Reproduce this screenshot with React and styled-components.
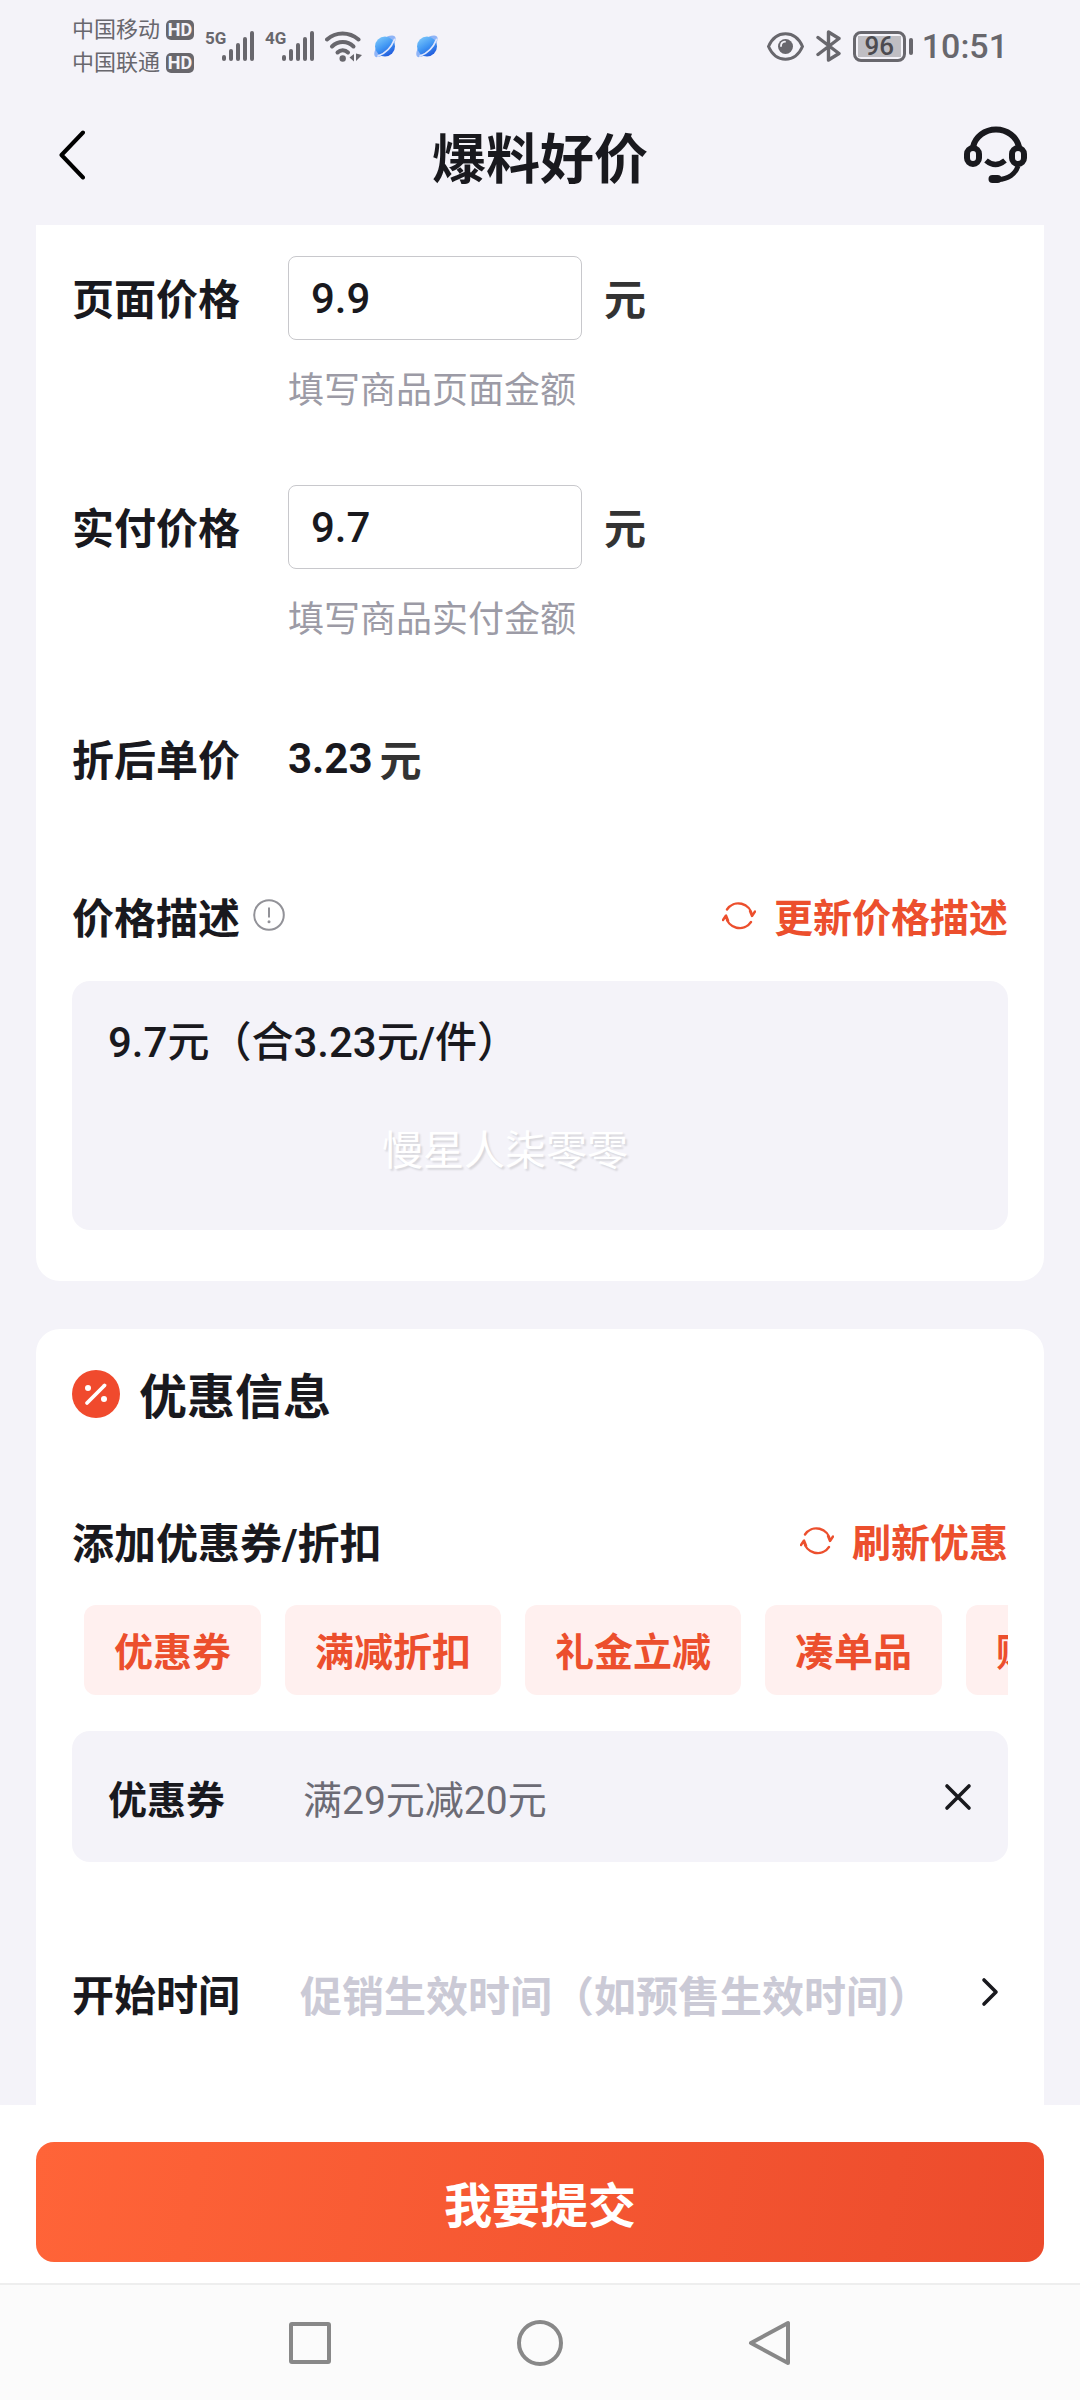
import React, { useState } from 'react';
import styled, { createGlobalStyle, ThemeProvider } from 'styled-components';

const theme = {
  page: '#f4f3f9',
  surface: '#ffffff',
  text: '#19191e',
  unit: '#333333',
  hint: '#9c9ba6',
  value: '#6c6b75',
  placeholder: '#cbcad6',
  status: '#68676d',
  accent: '#ec4f2d',
  accentSoft: '#fff0ef',
};

const GlobalStyle = createGlobalStyle`
  *, *::before, *::after {
    box-sizing: border-box;
  }
  body {
    margin: 0;
    background: ${theme.page};
  }
  body, input, textarea, button {
    font-family: Roboto, "Noto Sans CJK SC", sans-serif;
  }
  svg {
    display: block;
    flex: none;
  }
`;

const Page = styled.div`
  min-height: 100vh;
  display: flex;
  flex-direction: column;
  color: ${(props) => props.theme.text};
`;

const PlainButton = styled.button`
  display: flex;
  align-items: center;
  justify-content: center;
  padding: 0;
  border: 0;
  background: transparent;
  color: inherit;
  cursor: pointer;
`;

/* status bar */

const StatusBar = styled.div`
  display: flex;
  align-items: center;
  justify-content: space-between;
  height: 92px;
  padding: 0 72px;
  color: ${(props) => props.theme.status};
`;

const StatusGroup = styled.div`
  display: flex;
  align-items: center;
  gap: ${(props) => props.$gap}px;
`;

const Carrier = styled.div`
  display: flex;
  align-items: center;
  gap: 6px;
  font-size: 22px;
  line-height: 33px;
`;

const HdBadge = styled.span`
  width: 28px;
  border-radius: 5px;
  background: ${(props) => props.theme.status};
  color: ${(props) => props.theme.page};
  font-size: 18px;
  font-weight: 700;
  line-height: 20px;
  text-align: center;
`;

const Signal = styled.div`
  display: flex;
  align-items: flex-start;
`;

const Network = styled.span`
  width: 17px;
  font-size: 17px;
  font-weight: 700;
  line-height: 14px;
  white-space: nowrap;
`;

const Battery = styled.div`
  display: flex;
  align-items: center;
  gap: 3px;

  &::after {
    content: '';
    width: 4px;
    height: 17px;
    border-radius: 2px;
    background: ${(props) => props.theme.status};
  }
`;

const BatteryBody = styled.span`
  width: 53px;
  padding: 2px;
  border: 3px solid ${(props) => props.theme.status};
  border-radius: 8px;
`;

const BatteryLevel = styled.span`
  display: block;
  background: #bfbec3;
  color: #4c4b50;
  font-size: 26px;
  font-weight: 500;
  line-height: 21px;
  text-align: center;
`;

const Clock = styled.span`
  font-size: 34px;
  font-weight: 500;
  line-height: 40px;
`;

/* header */

const Header = styled.header`
  display: grid;
  grid-template-columns: 72px 1fr 72px;
  align-items: start;
  height: 133px;
  padding: 0 52px;
`;

const Title = styled.h1`
  margin: 0;
  font-size: 54px;
  font-weight: 700;
  line-height: 138px;
  text-align: center;
`;

const HeaderButton = styled(PlainButton)`
  height: 125px;
  padding-left: 7px;
  justify-content: ${(props) => props.$align};
`;

/* content */

const Content = styled.main`
  flex: 1;
  display: flex;
  flex-direction: column;
  gap: 48px;
  padding: 0 36px;
`;

const PriceCard = styled.section`
  padding: 31px 36px 51px;
  border-radius: 0 0 24px 24px;
  background: ${(props) => props.theme.surface};
`;

const CouponCard = styled.section`
  flex: 1;
  padding: 41px 36px;
  border-radius: 24px 24px 0 0;
  background: ${(props) => props.theme.surface};
`;

const Field = styled.div`
  display: grid;
  grid-template-columns: 216px 1fr;
  align-items: center;
  margin-bottom: 67px;
`;

const Label = styled.label`
  padding-top: 6px;
  font-size: 42px;
  font-weight: 700;
  line-height: 54px;
`;

const GroupTitle = styled.h3`
  margin: 0;
  padding-top: 6px;
  font-size: 42px;
  font-weight: 700;
  line-height: 54px;
`;

const FieldControl = styled.div`
  display: flex;
  align-items: center;
  height: 84px;
  gap: 22px;
`;

const FieldValue = styled(FieldControl)`
  height: 90px;
  gap: 7px;
`;

const PriceInput = styled.input`
  width: 294px;
  height: 84px;
  padding: 0 22px;
  border: 1px solid #c8c8cc;
  border-radius: 8px;
  background: transparent;
  color: inherit;
  font-size: 42px;
  font-weight: 500;
  outline: none;
`;

const Unit = styled.span`
  padding-top: 6px;
  color: ${(props) => props.theme.unit};
  font-size: 42px;
  font-weight: 700;
  line-height: 54px;
`;

const UnitPrice = styled.output`
  font-size: 42px;
  font-weight: 700;
  line-height: 54px;
`;

const Hint = styled.p`
  grid-column: 2;
  margin: 25px 0 0;
  color: ${(props) => props.theme.hint};
  font-size: 36px;
  line-height: 53px;
`;

const SectionRow = styled.div`
  display: flex;
  align-items: center;
  justify-content: space-between;
`;

const DescriptionHead = styled(SectionRow)`
  margin: 83px 0 34px;
`;

const LabelGroup = styled.div`
  display: flex;
  align-items: center;
  gap: 13px;

  svg {
    margin-bottom: 4px;
  }
`;

const RefreshButton = styled(PlainButton)`
  gap: 18px;
  padding-top: 4px;
  color: ${(props) => props.theme.accent};
  font-size: 39px;
  font-weight: 700;
  line-height: 54px;

  svg {
    margin-bottom: 6px;
  }
`;

const Description = styled.div`
  position: relative;
`;

const DescriptionInput = styled.textarea`
  display: block;
  width: 100%;
  height: 249px;
  padding: 32px 36px;
  border: 0;
  border-radius: 18px;
  background: ${(props) => props.theme.page};
  color: inherit;
  font-size: 42px;
  font-weight: 500;
  line-height: 60px;
  resize: none;
  outline: none;
`;

const Watermark = styled.span`
  position: absolute;
  top: 140px;
  left: 310px;
  color: #ffffff;
  font-size: 41px;
  line-height: 60px;
  text-shadow: 2px 2px 2px rgba(0, 0, 0, 0.12);
  pointer-events: none;
`;

const SectionTitle = styled.h2`
  display: flex;
  align-items: flex-start;
  gap: 19px;
  margin: 0 0 86px;
  font-size: 48px;
  font-weight: 700;
  line-height: 56px;
`;

const Chips = styled.div`
  display: flex;
  gap: 24px;
  margin: 33px 0 36px;
  padding-left: 12px;
  overflow: hidden;
`;

const Chip = styled.button`
  flex: none;
  padding: 21px 30px 15px;
  border: 0;
  border-radius: 12px;
  background: ${(props) => props.theme.accentSoft};
  color: ${(props) => props.theme.accent};
  font-size: 39px;
  font-weight: 700;
  line-height: 54px;
  cursor: pointer;
`;

const CouponItem = styled.div`
  display: grid;
  grid-template-columns: 195px 1fr auto;
  align-items: center;
  height: 131px;
  padding: 0 36px;
  border-radius: 18px;
  background: ${(props) => props.theme.page};
  font-size: 39px;
`;

const CouponLabel = styled.label`
  font-weight: 700;
`;

const CouponInput = styled.input`
  min-width: 0;
  padding: 0;
  border: 0;
  background: transparent;
  color: ${(props) => props.theme.value};
  font-size: 39px;
  outline: none;
`;

const TimeRow = styled.div`
  display: grid;
  grid-template-columns: 228px 1fr auto;
  align-items: center;
  margin-top: 102px;
  padding-right: 9px;

  svg {
    margin-bottom: 5px;
  }
`;

const TimeInput = styled.input`
  min-width: 0;
  height: 60px;
  padding: 6px 0 0;
  border: 0;
  background: transparent;
  color: inherit;
  font-size: 42px;
  font-weight: 700;
  outline: none;

  &::placeholder {
    color: ${(props) => props.theme.placeholder};
    opacity: 1;
  }
`;

/* bottom */

const Footer = styled.footer`
  padding: 37px 36px 21px;
  background: ${(props) => props.theme.surface};
`;

const SubmitButton = styled.button`
  display: block;
  width: 100%;
  height: 120px;
  border: 0;
  border-radius: 18px;
  background: linear-gradient(100deg, #ff6438, #ec4b2c);
  color: #ffffff;
  font-size: 48px;
  font-weight: 700;
  cursor: pointer;
`;

const NavBar = styled.nav`
  display: flex;
  align-items: center;
  justify-content: center;
  gap: 184px;
  height: 117px;
  border-top: 2px solid #eeeeee;
  background: #fbfbfb;
  color: #888888;
`;

const SignalBars = () => (
  <svg width="32" height="30" viewBox="0 0 32 30" fill="currentColor">
    {[0, 1, 2, 3, 4].map((i) => (
      <rect key={i} x={i * 7} y={24 - i * 6} width="4" height={6 + i * 6} rx="2" />
    ))}
  </svg>
);

const WifiIcon = () => (
  <svg width="38" height="31" viewBox="0 0 38 31" fill="none" stroke="currentColor" strokeWidth="4" strokeLinecap="round">
    <path d="M2 8.500C11 .5 24 .5 33.500 8.500" />
    <path d="M7 15.500C13 9.500 22.500 9.500 28.500 15.500" />
    <path d="M12.500 21.500C15.500 18.500 20 18.500 23 21.500" />
    <circle cx="17.700" cy="27.500" r="3.200" fill="currentColor" stroke="none" />
    <path d="M29 23v7.500l-4.500-4zM31 22.500v7.500l6-6z" fill="currentColor" stroke="none" />
  </svg>
);

const PlanetIcon = ({ id }) => (
  <svg width="22" height="23" viewBox="0 0 22 23">
    <defs>
      <linearGradient id={id} x1="0.200" y1="0" x2="0.800" y2="1">
        <stop offset="0" stopColor="#7cc8fb" />
        <stop offset="0.500" stopColor="#3f95f3" />
        <stop offset="1" stopColor="#1c50d8" />
      </linearGradient>
    </defs>
    <path d="M2 13C-1 19 0 23 4 22C7 21.500 9 20 11 18.500L3 12ZM13 1.500C18 0 22 0 21.500 4C21.500 6 20.500 8 19.500 10Z" fill="#8fb4f7" />
    <circle cx="11" cy="11.500" r="10" fill={`url(#${id})`} />
    <path d="M4 21C11 18.500 17.500 12 20.500 4.500" fill="none" stroke="#dfe6fc" strokeWidth="1.800" strokeLinecap="round" />
  </svg>
);

const EyeIcon = () => (
  <svg width="37" height="29" viewBox="0 0 37 29">
    <path
      d="M1.500 14.500C5 6.500 11 1.800 18.500 1.800S32 6.500 35.500 14.500C32 22.500 26 27.200 18.500 27.200S5 22.500 1.500 14.500Z"
      fill="none"
      stroke="currentColor"
      strokeWidth="3"
    />
    <circle cx="18.500" cy="14.500" r="7.500" fill="currentColor" />
    <path d="M14 14c0-2.500 1.700-4.200 4-4.300" fill="none" stroke="#f4f3f9" strokeWidth="1.800" strokeLinecap="round" />
  </svg>
);

const BluetoothIcon = () => (
  <svg width="25" height="32" viewBox="0 0 25 32" fill="none" stroke="currentColor" strokeWidth="3.400" strokeLinejoin="round" strokeLinecap="round">
    <path d="M2 7.500L23 23.500L12.500 30V2L23 8.500L2 24.500" />
  </svg>
);

const BackIcon = () => (
  <svg width="26" height="50" viewBox="0 0 26 50" fill="none" stroke="#000" strokeWidth="4" strokeLinecap="round" strokeLinejoin="round">
    <path d="M24 2.500L2.500 25L24 47.500" />
  </svg>
);

const HeadsetIcon = () => (
  <svg width="64" height="60" viewBox="0 0 64 60" fill="none" stroke="currentColor" strokeWidth="6">
    <path d="M9 22A23.500 22 0 0 1 55 22" />
    <rect x="3" y="23" width="12" height="16" rx="6" />
    <rect x="48" y="23" width="12" height="16" rx="6" />
    <path d="M22 35.500Q31.500 43.500 41 35.500" strokeWidth="5.500" />
    <path d="M54 41C51.500 49 44 54 34 54.500" strokeWidth="5" />
    <rect x="24.500" y="50" width="13" height="8" rx="4" fill="currentColor" stroke="none" />
  </svg>
);

const InfoIcon = () => (
  <svg width="32" height="32" viewBox="0 0 32 32" fill="none" stroke="#929298" strokeWidth="2">
    <circle cx="16" cy="16" r="14.800" />
    <path d="M16 8.500V18.500" />
    <circle cx="16" cy="22.800" r="1.500" fill="#929298" stroke="none" />
  </svg>
);

const RefreshIcon = () => (
  <svg width="34" height="30" viewBox="0 0 34 30" fill="none" stroke="currentColor" strokeWidth="2.400" strokeLinecap="round" strokeLinejoin="round">
    <path d="M5 8.500A13.700 13.700 0 0 1 30 14.500M28 10L30 15L33 10.500" />
    <path d="M29 21A13.700 13.700 0 0 1 4 15M6 19.500L4 14.500L1 19" />
  </svg>
);

const PercentIcon = () => (
  <svg width="48" height="48" viewBox="0 0 48 48">
    <circle cx="24" cy="24" r="24" fill="#f04a2d" />
    <path d="M15 33L32.500 15.500" stroke="#fff" strokeWidth="3.800" strokeLinecap="round" />
    <circle cx="16" cy="18" r="3" fill="#fff" />
    <circle cx="32" cy="29" r="3" fill="#fff" />
  </svg>
);

const CloseIcon = () => (
  <svg width="28" height="28" viewBox="0 0 28 28" fill="none" stroke="currentColor" strokeWidth="3.600" strokeLinecap="round">
    <path d="M3 3L25 25M25 3L3 25" />
  </svg>
);

const ArrowIcon = () => (
  <svg width="18" height="30" viewBox="0 0 18 30" fill="none" stroke="currentColor" strokeWidth="3.600" strokeLinecap="round" strokeLinejoin="round">
    <path d="M3 3L15 15L3 27" />
  </svg>
);

const NavIcon = ({ children }) => (
  <svg width="46" height="46" viewBox="0 0 46 46" fill="none" stroke="currentColor" strokeWidth="4" strokeLinejoin="round">
    {children}
  </svg>
);

const couponTypes = ['优惠券', '满减折扣', '礼金立减', '凑单品', '购物金'];

const PriceField = ({ id, label, hint, value, onChange }) => (
  <Field>
    <Label htmlFor={id}>{label}</Label>
    <FieldControl>
      <PriceInput id={id} inputMode="decimal" value={value} onChange={(e) => onChange(e.target.value)} />
      <Unit>元</Unit>
    </FieldControl>
    <Hint>{hint}</Hint>
  </Field>
);

const App = () => {
  const [pagePrice, setPagePrice] = useState('9.9');
  const [paidPrice, setPaidPrice] = useState('9.7');
  const [description, setDescription] = useState('9.7元（合3.23元/件）');
  const [coupon, setCoupon] = useState('满29元减20元');

  return (
    <ThemeProvider theme={theme}>
      <GlobalStyle />
      <Page lang="zh-CN">
        <StatusBar>
          <StatusGroup $gap={11}>
            <div>
              <Carrier>
                中国移动<HdBadge>HD</HdBadge>
              </Carrier>
              <Carrier>
                中国联通<HdBadge>HD</HdBadge>
              </Carrier>
            </div>
            <Signal>
              <Network>5G</Network>
              <SignalBars />
            </Signal>
            <Signal>
              <Network>4G</Network>
              <SignalBars />
            </Signal>
            <WifiIcon />
            <StatusGroup $gap={20}>
              <PlanetIcon id="planet-a" />
              <PlanetIcon id="planet-b" />
            </StatusGroup>
          </StatusGroup>
          <StatusGroup $gap={9}>
            <StatusGroup $gap={12}>
              <EyeIcon />
              <BluetoothIcon />
              <Battery>
                <BatteryBody>
                  <BatteryLevel>96</BatteryLevel>
                </BatteryBody>
              </Battery>
            </StatusGroup>
            <Clock>10:51</Clock>
          </StatusGroup>
        </StatusBar>

        <Header>
          <HeaderButton type="button" aria-label="返回" $align="flex-start">
            <BackIcon />
          </HeaderButton>
          <Title>爆料好价</Title>
          <HeaderButton type="button" aria-label="客服" $align="flex-end">
            <HeadsetIcon />
          </HeaderButton>
        </Header>

        <Content>
          <PriceCard>
            <PriceField
              id="page-price"
              label="页面价格"
              hint="填写商品页面金额"
              value={pagePrice}
              onChange={setPagePrice}
            />
            <PriceField
              id="paid-price"
              label="实付价格"
              hint="填写商品实付金额"
              value={paidPrice}
              onChange={setPaidPrice}
            />
            <Field>
              <Label htmlFor="unit-price">折后单价</Label>
              <FieldValue>
                <UnitPrice id="unit-price">3.23</UnitPrice>
                <Unit>元</Unit>
              </FieldValue>
            </Field>

            <DescriptionHead>
              <LabelGroup>
                <Label htmlFor="description">价格描述</Label>
                <InfoIcon />
              </LabelGroup>
              <RefreshButton type="button">
                <RefreshIcon />
                更新价格描述
              </RefreshButton>
            </DescriptionHead>
            <Description>
              <DescriptionInput
                id="description"
                value={description}
                onChange={(e) => setDescription(e.target.value)}
              />
              <Watermark>慢星人柒零零</Watermark>
            </Description>
          </PriceCard>

          <CouponCard>
            <SectionTitle>
              <PercentIcon />
              优惠信息
            </SectionTitle>
            <SectionRow>
              <GroupTitle>添加优惠券/折扣</GroupTitle>
              <RefreshButton type="button">
                <RefreshIcon />
                刷新优惠
              </RefreshButton>
            </SectionRow>
            <Chips>
              {couponTypes.map((name) => (
                <Chip type="button" key={name}>
                  {name}
                </Chip>
              ))}
            </Chips>
            <CouponItem>
              <CouponLabel htmlFor="coupon">优惠券</CouponLabel>
              <CouponInput id="coupon" value={coupon} onChange={(e) => setCoupon(e.target.value)} />
              <PlainButton type="button" aria-label="删除" onClick={() => setCoupon('')}>
                <CloseIcon />
              </PlainButton>
            </CouponItem>
            <TimeRow>
              <Label htmlFor="start-time">开始时间</Label>
              <TimeInput id="start-time" readOnly placeholder="促销生效时间（如预售生效时间）" />
              <PlainButton type="button" aria-label="选择时间">
                <ArrowIcon />
              </PlainButton>
            </TimeRow>
          </CouponCard>
        </Content>

        <Footer>
          <SubmitButton type="button">我要提交</SubmitButton>
        </Footer>
        <NavBar>
          <PlainButton type="button" aria-label="最近任务">
            <NavIcon>
              <rect x="4" y="4" width="38" height="38" rx="1" />
            </NavIcon>
          </PlainButton>
          <PlainButton type="button" aria-label="主屏幕">
            <NavIcon>
              <circle cx="23" cy="23" r="21" />
            </NavIcon>
          </PlainButton>
          <PlainButton type="button" aria-label="后退">
            <NavIcon>
              <path d="M41 3V43L4 23Z" />
            </NavIcon>
          </PlainButton>
        </NavBar>
      </Page>
    </ThemeProvider>
  );
};

export default App;
